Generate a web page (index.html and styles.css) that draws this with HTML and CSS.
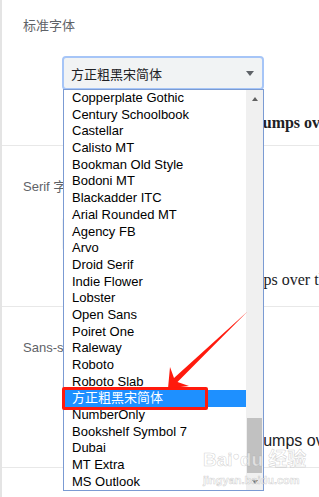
FILE: index.html
```html
<!DOCTYPE html>
<html lang="zh-CN">
<head>
<meta charset="utf-8">
<title>字体设置</title>
<link rel="stylesheet" href="styles.css">
</head>
<body>
<div class="page">
  <section class="section section--first">
    <div class="label">标准字体</div>
    <div class="select select--focused"><span class="select-value">方正粗黑宋简体</span><span class="select-caret"></span></div>
    <div class="sample sample--standard">The quick brown fox jumps over the lazy dog</div>
  </section>
  <section class="section">
    <div class="label">Serif 字体</div>
    <div class="select"><span class="select-value">Times New Roman</span><span class="select-caret"></span></div>
    <div class="sample sample--serif">The quick brown fox jumps over the lazy dog</div>
  </section>
  <section class="section">
    <div class="label">Sans-serif 字体</div>
    <div class="select"><span class="select-value">Arial</span><span class="select-caret"></span></div>
    <div class="sample sample--sans">The quick brown fox jumps over the lazy dog</div>
  </section>
</div>

<div class="dropdown">
  <ul class="options">
    <li class="option">Copperplate Gothic</li>
    <li class="option">Century Schoolbook</li>
    <li class="option">Castellar</li>
    <li class="option">Calisto MT</li>
    <li class="option">Bookman Old Style</li>
    <li class="option">Bodoni MT</li>
    <li class="option">Blackadder ITC</li>
    <li class="option">Arial Rounded MT</li>
    <li class="option">Agency FB</li>
    <li class="option">Arvo</li>
    <li class="option">Droid Serif</li>
    <li class="option">Indie Flower</li>
    <li class="option">Lobster</li>
    <li class="option">Open Sans</li>
    <li class="option">Poiret One</li>
    <li class="option">Raleway</li>
    <li class="option">Roboto</li>
    <li class="option">Roboto Slab</li>
    <li class="option option--selected">方正粗黑宋简体</li>
    <li class="option">NumberOnly</li>
    <li class="option">Bookshelf Symbol 7</li>
    <li class="option">Dubai</li>
    <li class="option">MT Extra</li>
    <li class="option">MS Outlook</li>
  </ul>
  <div class="scrollbar">
    <div class="scroll-btn"><span class="arrow-up"></span></div>
    <div class="scroll-track"><div class="scroll-thumb"></div></div>
    <div class="scroll-btn"><span class="arrow-down"></span></div>
  </div>
</div>

<div class="callout-box"></div>
<svg class="callout-arrow" width="319" height="497" viewBox="0 0 319 497">
  <polygon points="247.5,311.5 177.5,382 189,386 168,388.5 170,367 174,378" fill="#ff1a0d"/>
</svg>

<div class="watermark">
  <div class="wm-brand">Bai<span class="wm-paw">●</span>du 经验</div>
  <div class="wm-url">jingyan.baidu.com</div>
</div>
</body>
</html>
```

FILE: styles.css
```css
* { box-sizing: border-box; }

html, body {
  margin: 0;
  padding: 0;
}

body {
  width: 319px;
  height: 497px;
  overflow: hidden;
  position: relative;
  background: #ffffff;
  color: #202124;
  font-family: "Liberation Sans", "Noto Sans CJK SC", sans-serif;
}

.page {
  border-left: 2px solid #e4e4e4;
  margin-top: -15px;
  min-height: 520px;
}

.section {
  height: 161px;
  padding: 33px 0 0 21px;
  border-bottom: 1px solid #e8e8e8;
}

.label {
  font-size: 13px;
  line-height: 16px;
  color: #5f6368;
  font-family: "Liberation Sans", "Noto Sans CJK SC", sans-serif;
  white-space: nowrap;
}

.select {
  margin: 22px 0 0 39px;
  width: 202px;
  height: 34px;
  border: 2px solid transparent;
  border-radius: 4px;
  background: #f1f3f4;
  display: flex;
  align-items: center;
  justify-content: space-between;
  padding: 0 8px 0 7px;
}

.select--focused {
  border-color: #a6c5f7;
}

.select-value {
  font-size: 13px;
  color: #202124;
  font-family: "Noto Sans CJK SC", sans-serif;
}

.select-caret {
  width: 0;
  height: 0;
  border-left: 4.5px solid transparent;
  border-right: 4.5px solid transparent;
  border-top: 5px solid #5f6368;
}

.sample {
  margin-top: 19px;
  line-height: 20px;
  font-size: 16px;
  white-space: nowrap;
  color: #202124;
}

.sample--standard {
  font-family: "Liberation Serif", serif;
  font-weight: bold;
  margin-top: 23px;
  margin-left: 88px;
}

.sample--serif {
  font-family: "Liberation Serif", serif;
  margin-left: 77px;
}

.sample--sans {
  font-family: "Liberation Sans", sans-serif;
  margin-left: 89px;
}

/* dropdown popup */
.dropdown {
  position: absolute;
  left: 63px;
  top: 89px;
  width: 201px;
  height: 402px;
  border: 1px solid #7b9bd3;
  background: #ffffff;
  display: flex;
}

.options {
  list-style: none;
  margin: 0;
  padding: 0;
  flex: 1;
  overflow: hidden;
}

.option {
  height: 16.7px;
  line-height: 16.7px;
  padding-left: 8px;
  font-size: 13px;
  color: #000000;
  white-space: nowrap;
  font-family: "Liberation Sans", "Noto Sans CJK SC", sans-serif;
}

.option--selected {
  background: #1e90ff;
  color: #ffffff;
}

.scrollbar {
  width: 17px;
  background: #f0f0f0;
  display: flex;
  flex-direction: column;
}

.scroll-btn {
  height: 17px;
  display: flex;
  align-items: center;
  justify-content: center;
}

.scroll-track {
  flex: 1;
  display: flex;
  flex-direction: column;
  justify-content: flex-end;
}

.scroll-thumb {
  height: 55px;
  margin: 0 1px;
  background: #c1c1c1;
}

.arrow-up {
  width: 0;
  height: 0;
  border-left: 3.5px solid transparent;
  border-right: 3.5px solid transparent;
  border-bottom: 4px solid #606060;
}

.arrow-down {
  width: 0;
  height: 0;
  border-left: 3.5px solid transparent;
  border-right: 3.5px solid transparent;
  border-top: 4px solid #606060;
}

/* annotation */
.callout-box {
  position: absolute;
  left: 62px;
  top: 387px;
  width: 146px;
  height: 23px;
  border: 3px solid #ff1a0d;
  border-radius: 2px;
}

.callout-arrow {
  position: absolute;
  left: 0;
  top: 0;
  pointer-events: none;
}

/* watermark */
.watermark {
  position: absolute;
  left: 203px;
  top: 450px;
  pointer-events: none;
  color: rgba(255, 255, 255, 0.55);
  -webkit-text-stroke: 0.6px rgba(160, 160, 160, 0.45);
  line-height: 1;
}

.wm-brand {
  font-family: "Liberation Sans", "Noto Sans CJK SC", sans-serif;
  font-weight: bold;
  font-size: 19px;
  white-space: nowrap;
}

.wm-paw {
  font-size: 12px;
  vertical-align: 6px;
}

.wm-url {
  margin-top: 6px;
  font-family: "Liberation Sans", sans-serif;
  font-weight: bold;
  font-size: 11px;
  white-space: nowrap;
}
```
